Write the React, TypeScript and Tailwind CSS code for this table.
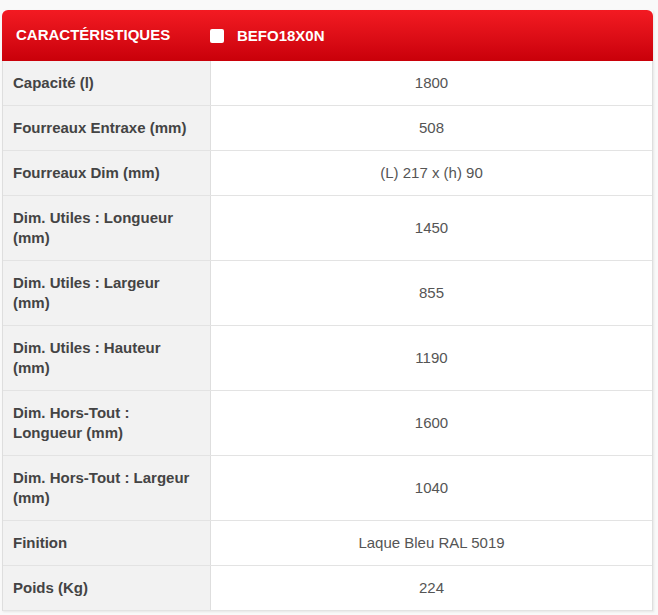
import React from 'react';

interface Row {
  label: string;
  value: string;
}

const rows: Row[] = [
  { label: 'Capacité (l)', value: '1800' },
  { label: 'Fourreaux Entraxe (mm)', value: '508' },
  { label: 'Fourreaux Dim (mm)', value: '(L) 217 x (h) 90' },
  { label: 'Dim. Utiles : Longueur (mm)', value: '1450' },
  { label: 'Dim. Utiles : Largeur (mm)', value: '855' },
  { label: 'Dim. Utiles : Hauteur (mm)', value: '1190' },
  { label: 'Dim. Hors-Tout : Longueur (mm)', value: '1600' },
  { label: 'Dim. Hors-Tout : Largeur (mm)', value: '1040' },
  { label: 'Finition', value: 'Laque Bleu RAL 5019' },
  { label: 'Poids (Kg)', value: '224' },
];

function App() {
  return (
    <div className="min-h-[615px] bg-[#f9f9f9] pt-[10px] pl-[2px] font-['Liberation_Sans',Arial,sans-serif]">
      <div className="w-[651px] shadow-[1px_1px_2px_rgba(0,0,0,0.08)]">
        <div className="flex h-[51px] items-center rounded-t-[6px] bg-gradient-to-b from-[#f31a22] to-[#c90009] text-white">
          <div className="w-[208px] pl-[14px] text-[15px] font-bold">CARACTÉRISTIQUES</div>
          <div className="flex items-center">
            <span className="h-[14px] w-[14px] rounded-[2px] bg-white" />
            <span className="ml-[13px] mt-[1px] text-[15px] font-bold">BEFO18X0N</span>
          </div>
        </div>
        <div className="border-l border-r border-[#dedede] bg-white">
          {rows.map((r) => (
            <div key={r.label} className="flex border-b border-[#e3e3e3]">
              <div className="w-[208px] shrink-0 bg-[#f2f2f2] border-r border-[#dedede] px-[10px] py-[12px] text-[15px] font-bold leading-[20px] text-[#444]">
                {r.label}
              </div>
              <div className="flex flex-1 items-center justify-center text-[15px] text-[#555]">
                {r.value}
              </div>
            </div>
          ))}
        </div>
      </div>
    </div>
  );
}

export default App;
